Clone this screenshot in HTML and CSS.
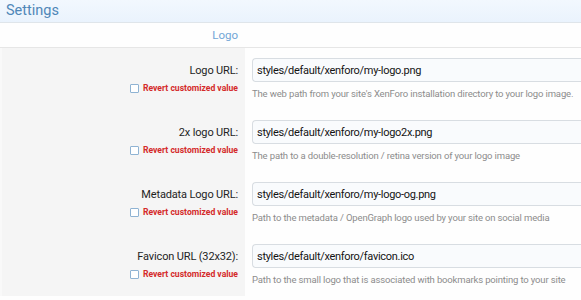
FILE: index.html
```html
<!DOCTYPE html>
<html lang="en">
<head>
  <meta charset="UTF-8">
  <title>Settings</title>
  <link rel="stylesheet" href="styles.css">
</head>
<body>
  <div class="block">
    <h2 class="block-header">Settings</h2>

    <div class="group-head">
      <div class="group-title">Logo</div>
    </div>

    <div class="option-row">
      <div class="option-label">
        <label class="label-text">Logo URL:</label>
        <label class="revert"><span class="check"></span>Revert customized value</label>
      </div>
      <div class="option-input">
        <input class="input" type="text" value="styles/default/xenforo/my-logo.png">
        <div class="explain">The web path from your site's XenForo installation directory to your logo image.</div>
      </div>
    </div>

    <div class="option-row">
      <div class="option-label">
        <label class="label-text">2x logo URL:</label>
        <label class="revert"><span class="check"></span>Revert customized value</label>
      </div>
      <div class="option-input">
        <input class="input" type="text" value="styles/default/xenforo/my-logo2x.png">
        <div class="explain">The path to a double-resolution / retina version of your logo image</div>
      </div>
    </div>

    <div class="option-row">
      <div class="option-label">
        <label class="label-text">Metadata Logo URL:</label>
        <label class="revert"><span class="check"></span>Revert customized value</label>
      </div>
      <div class="option-input">
        <input class="input" type="text" value="styles/default/xenforo/my-logo-og.png">
        <div class="explain">Path to the metadata / OpenGraph logo used by your site on social media</div>
      </div>
    </div>

    <div class="option-row">
      <div class="option-label">
        <label class="label-text">Favicon URL (32x32):</label>
        <label class="revert"><span class="check"></span>Revert customized value</label>
      </div>
      <div class="option-input">
        <input class="input" type="text" value="styles/default/xenforo/favicon.ico">
        <div class="explain">Path to the small logo that is associated with bookmarks pointing to your site</div>
      </div>
    </div>
  </div>
</body>
</html>
```

FILE: styles.css
```css
body {
  margin: 0;
  font-family: Roboto, "Open Sans", sans-serif;
  background-color: #fefefe;
  color: #141414;
  overflow: hidden;
}
.block {
  width: 581px;
}
.block-header {
  margin: 0;
  height: 22px;
  padding: 0 6px;
  font-size: 14.5px;
  font-weight: 400;
  line-height: 22px;
  color: #4f87b8;
  background: linear-gradient(#f2f8fe, #eaf3fd);
  border-bottom: 1px solid #dfe5ea;
}
.group-head {
  display: flex;
  height: 24px;
  border-bottom: 1px solid #e6e6e6;
}
.group-title {
  width: 245px;
  flex-shrink: 0;
  padding-right: 7px;
  box-sizing: border-box;
  text-align: right;
  font-size: 11.5px;
  line-height: 24px;
  color: #72a6d6;
}
.option-row {
  display: flex;
  height: 62px;
}
.option-label {
  width: 245px;
  flex-shrink: 0;
  box-sizing: border-box;
  padding: 15px 7px 0 0;
  background-color: #f5f5f5;
  border-left: 2px solid #f9f9f9;
  display: flex;
  flex-direction: column;
  align-items: flex-end;
}
.label-text {
  font-size: 11px;
  letter-spacing: -0.15px;
  line-height: 16px;
  color: #1e1e1e;
}
.revert {
  display: flex;
  align-items: center;
  gap: 4px;
  margin-top: 3px;
  font-size: 8.6px;
  font-weight: 700;
  line-height: 12px;
  color: #d42a2a;
}
.check {
  width: 7px;
  height: 7px;
  border: 1px solid #8fb3d3;
  border-radius: 1px;
  background-color: #fff;
}
.option-input {
  flex: 1;
  min-width: 0;
  padding: 10px 0 0 7px;
}
.input {
  display: block;
  width: 100%;
  height: 24px;
  box-sizing: border-box;
  padding: 0 4px;
  font-family: inherit;
  font-size: 11px;
  letter-spacing: -0.3px;
  color: #141414;
  background-color: #f9fbfd;
  border: 1px solid #d8dde2;
  border-right: 0;
  border-radius: 4px 0 0 4px;
}
.explain {
  margin-top: 5px;
  font-size: 9.5px;
  letter-spacing: -0.15px;
  line-height: 13px;
  color: #8c8c8c;
  white-space: nowrap;
}
```
